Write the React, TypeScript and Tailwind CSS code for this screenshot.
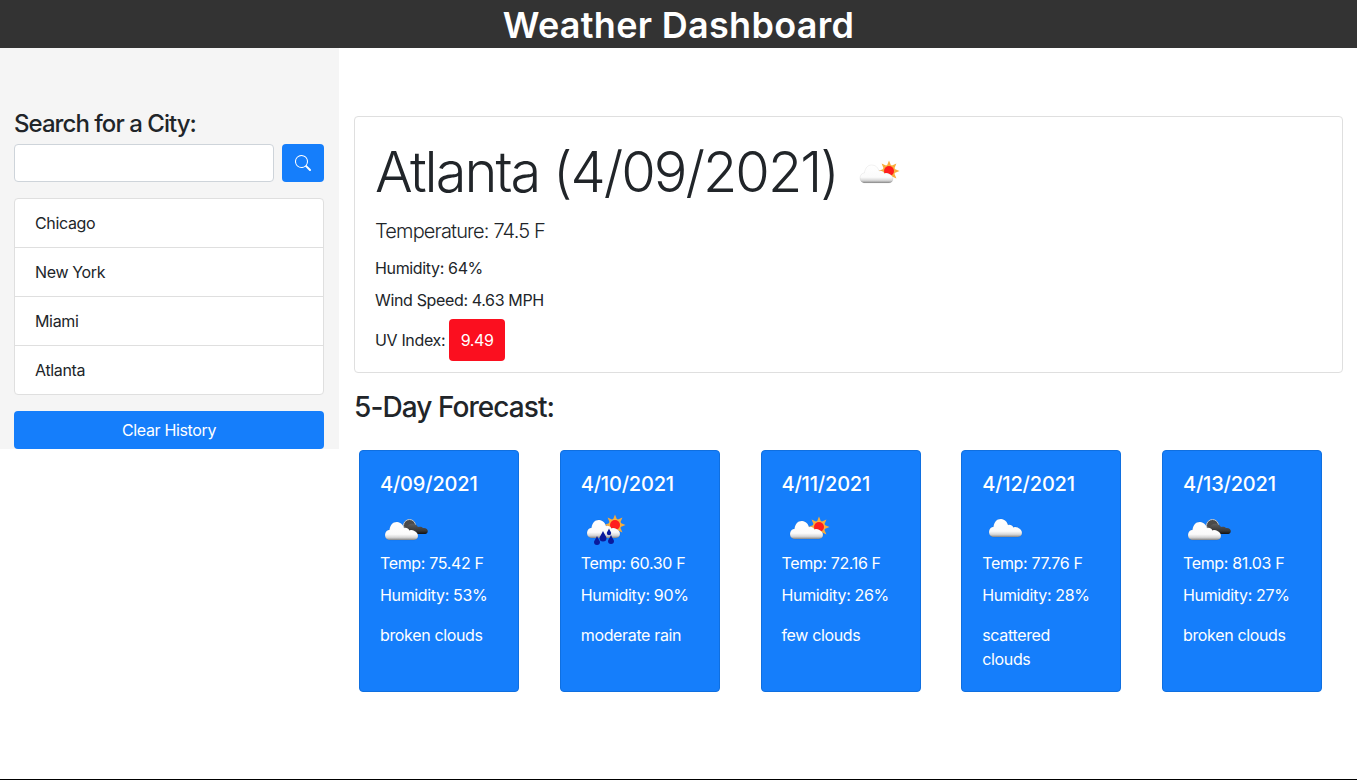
import React from "react";
import { BsSearch } from "react-icons/bs";

type Kind = "few" | "broken" | "rain" | "scattered";

const cities = ["Chicago", "New York", "Miami", "Atlanta"];

const forecast: { date: string; kind: Kind; temp: string; humidity: string; desc: string }[] = [
  { date: "4/09/2021", kind: "broken", temp: "75.42", humidity: "53", desc: "broken clouds" },
  { date: "4/10/2021", kind: "rain", temp: "60.30", humidity: "90", desc: "moderate rain" },
  { date: "4/11/2021", kind: "few", temp: "72.16", humidity: "26", desc: "few clouds" },
  { date: "4/12/2021", kind: "scattered", temp: "77.76", humidity: "28", desc: "scattered clouds" },
  { date: "4/13/2021", kind: "broken", temp: "81.03", humidity: "27", desc: "broken clouds" },
];

const cloudPath =
  "M10 35 C6.5 35 5 32.5 5 30 C5 27 7 25 9.5 24.8 C10 20.5 12.5 17 16.5 17 C20.5 17 23 19.5 24 23 C26 22.2 28.5 23 29.5 25.5 C31 24.8 33 25 34.5 26 C37 27 38 29 38 31 C38 33.5 36 35 33.5 35 Z";

// where the white cloud sits inside the 50px icon
const cloudOffset: Record<Kind, string> = {
  few: "translate(3 -1)",
  broken: "translate(0 0)",
  rain: "translate(1 -2)",
  scattered: "translate(2 -3)",
};

const Sun = ({ cx, cy }: { cx: number; cy: number }) => (
  <g>
    {[0, 45, 90, 135, 180, 225, 270, 315].map((a) => (
      <polygon
        key={a}
        points={`${cx - 2.2},${cy - 5} ${cx + 2.2},${cy - 5} ${cx},${cy - 10.5}`}
        fill="#f8ab3c"
        transform={`rotate(${a} ${cx} ${cy})`}
      />
    ))}
    <circle cx={cx} cy={cy} r="6.2" fill="#f9b23f" />
    <circle cx={cx} cy={cy} r="5" fill="#ff1d1d" />
  </g>
);

const DarkCloud = () => (
  <g>
    <circle cx="29.5" cy="20.5" r="6" fill="#4a4a4a" stroke="#c9c9c9" strokeWidth="1" />
    <path
      d="M26 29 L26 24 C27 19.5 31 18 34 19 C36 19.5 37.5 21 38 22 C40.5 21.5 42 22 43 23 C46 22.5 47.8 24.5 47.8 26 C47.8 28.5 46 29 44 29 Z"
      fill="url(#dark-cloud)"
    />
  </g>
);

const drops = [
  [16, 37, 3],
  [22, 33, 3.5],
  [28, 28, 2.2],
  [30, 36, 3],
];

const WeatherIcon = ({ kind }: { kind: Kind }) => (
  <svg width="50" height="46" viewBox="0 0 50 46" className="block">
    <defs>
      <linearGradient id="white-cloud" x1="0" y1="0" x2="0" y2="1">
        <stop offset="0" stopColor="#ffffff" />
        <stop offset="0.68" stopColor="#fbfbfb" />
        <stop offset="0.85" stopColor="#d9d9d9" />
        <stop offset="1" stopColor="#8c8c8c" />
      </linearGradient>
      <linearGradient id="dark-cloud" x1="0" y1="0" x2="0" y2="1">
        <stop offset="0" stopColor="#5e5e5e" />
        <stop offset="0.7" stopColor="#363636" />
        <stop offset="1" stopColor="#111111" />
      </linearGradient>
    </defs>
    {kind === "few" && <Sun cx={37} cy={22} />}
    {kind === "rain" && <Sun cx={34} cy={20} />}
    {kind === "broken" && <DarkCloud />}
    <path d={cloudPath} fill="url(#white-cloud)" stroke="#000000" strokeOpacity="0.1" strokeWidth="0.6" transform={cloudOffset[kind]} />
    {kind === "rain" &&
      drops.map(([x, y, r]) => (
        <path
          key={x}
          d={`M${x} ${y - r * 2} C${x + r * 0.4} ${y - r} ${x + r} ${y - r * 0.4} ${x + r} ${y} A${r} ${r} 0 1 1 ${x - r} ${y} C${x - r} ${y - r * 0.4} ${x - r * 0.4} ${y - r} ${x} ${y - r * 2} Z`}
          fill="#0a1a9c"
        />
      ))}
  </svg>
);

const App = () => {
  return (
    <div className="h-[780px] overflow-hidden border-b border-black bg-white font-['Inter','Liberation_Sans',sans-serif] text-[16px] leading-6 tracking-[-0.35px] text-[#212529]">
      {/* Header */}
      <header className="flex h-12 items-center justify-center bg-[#333333] pt-px text-[36px] font-semibold leading-[48px] tracking-[0.3px] text-white">
        Weather Dashboard
      </header>

      <div className="flex items-start">
        {/* Sidebar */}
        <aside className="w-[339px] shrink-0 bg-[#f5f5f5] pl-[14px] pr-[15px] pt-[61px]">
          <h2 className="mb-[6px] text-[24px] font-medium leading-[29px] tracking-[-0.95px]">Search for a City:</h2>
          <div className="mb-4 flex gap-2">
            <input className="h-[38px] min-w-0 flex-1 rounded border border-[#ced4da] bg-white" />
            <button className="flex h-[38px] w-[42px] items-center justify-center rounded bg-[#157efb] text-white">
              <BsSearch size={16} />
            </button>
          </div>
          <ul className="mb-4 rounded border border-[#dfdfdf] bg-white">
            {cities.map((city, index) => (
              <li
                key={city}
                className={`flex items-center px-5 ${index > 0 ? "h-[49px] border-t border-[#dfdfdf]" : "h-12"}`}
              >
                {city}
              </li>
            ))}
          </ul>
          <button className="block h-[38px] w-full rounded bg-[#157efb] text-center text-white">Clear History</button>
        </aside>

        {/* Main */}
        <main className="min-w-0 flex-1 pl-[15px] pr-[14px] pt-[68px]">
          <section className="rounded border border-[#dfdfdf] px-5 pb-[11px] pt-[21px]">
            <div className="mb-[11px] flex h-[67px] items-start">
              <h1 className="mt-px text-[56px] font-light leading-[67px] tracking-[-2px]">Atlanta (4/09/2021)</h1>
              <div className="ml-[14px] mt-[11px]">
                <WeatherIcon kind="few" />
              </div>
            </div>
            <p className="mb-[10px] text-[20px] font-light leading-[30px] tracking-[-0.85px]">Temperature: 74.5 F</p>
            <p className="mb-2">Humidity: 64%</p>
            <p className="mb-[7px]">Wind Speed: 4.63 MPH</p>
            <p className="flex items-center">
              UV Index:
              <span className="ml-1 flex h-[42px] w-14 items-center justify-center rounded bg-[#fb0f1f] text-white">
                9.49
              </span>
            </p>
          </section>

          <h2 className="mt-[17px] text-[28px] font-medium leading-[34px] tracking-[-0.93px]">5-Day Forecast:</h2>

          <div className="ml-[5px] mt-[26px] flex gap-[40.75px]">
            {forecast.map((day) => (
              <div
                key={day.date}
                className="h-[242px] w-40 rounded border border-[#0f6fe0] bg-[#157efb] px-5 pt-5 text-white"
              >
                <h3 className="mb-[9px] pt-px text-[20px] font-medium leading-6 tracking-[-0.2px]">{day.date}</h3>
                <WeatherIcon kind={day.kind} />
                <p className="mb-2">Temp: {day.temp} F</p>
                <p className="mb-4">Humidity: {day.humidity}%</p>
                <p>{day.desc}</p>
              </div>
            ))}
          </div>
        </main>
      </div>
    </div>
  );
};

export default App;
